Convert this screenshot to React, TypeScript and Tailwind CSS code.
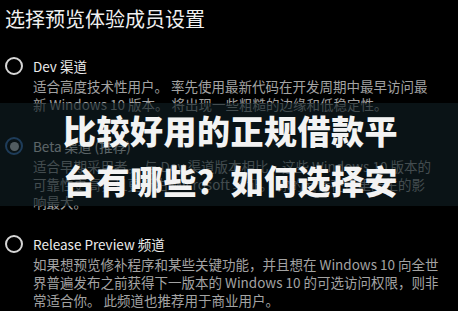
const sections = [
  {
    label: "Dev 渠道",
    selected: false,
    lines: [
      "适合高度技术性用户。 率先使用最新代码在开发周期中最早访问最",
      "新 Windows 10 版本。 将出现一些粗糙的边缘和低稳定性。",
    ],
  },
  {
    label: "Beta 渠道 (推荐)",
    selected: true,
    lines: [
      "适合早期采用者。 与 Dev 渠道版本相比，这些 Windows 10 版本的",
      "可靠性更高，且更新由 Microsoft 验证。 你的反馈在这里产生的影",
      "响最大。",
    ],
  },
  {
    label: "Release Preview 频道",
    selected: false,
    lines: [
      "如果想预览修补程序和某些关键功能，并且想在 Windows 10 向全世",
      "界普遍发布之前获得下一版本的 Windows 10 的可选访问权限，则非",
      "常适合你。 此频道也推荐用于商业用户。",
    ],
  },
];

const Radio = ({ selected }: { selected: boolean }) =>
  selected ? (
    <div className="w-[18px] h-[18px] rounded-full border-2 border-[#3a77c2] flex items-center justify-center shrink-0">
      <div className="w-[9px] h-[9px] rounded-full bg-[#cfd3d8]" />
    </div>
  ) : (
    <div className="w-[18px] h-[18px] rounded-full border-2 border-[#d6d6d6] shrink-0" />
  );

export default function App() {
  return (
    <div
      className="relative w-[458px] h-[311px] bg-black overflow-hidden"
      style={{ fontFamily: '"Noto Sans CJK SC", "Noto Sans", sans-serif' }}
    >
      <h1 className="pt-[6px] pl-[5px] text-[20px] leading-[26px] text-[#f0f0f0] font-normal whitespace-nowrap">
        选择预览体验成员设置
      </h1>

      <div className="mt-[23px] flex flex-col gap-[22px]">
        {sections.map((s) => (
          <div key={s.label} className="flex flex-col">
            <div className="flex items-center gap-[10px] pl-[5px] h-[22px]">
              <Radio selected={s.selected} />
              <span className="text-[13.5px] leading-[22px] text-[#ececec] whitespace-nowrap">{s.label}</span>
            </div>
            <div className="pl-[33px] text-[13.5px] leading-[18px] text-[#a3a3a3]">
              {s.lines.map((l) => (
                <p key={l} className="whitespace-nowrap">{l}</p>
              ))}
            </div>
          </div>
        ))}
      </div>

      {/* headline banner over the settings */}
      <div className="absolute left-0 right-0 top-[103px] h-[103px] bg-[#0f1d22]/65 flex flex-col justify-center pl-[63px]">
        <p className="text-[33px] leading-[50px] font-black tracking-[0.5px] text-[#f3f3f3] whitespace-nowrap">
          比较好用的正规借款平
        </p>
        <p className="text-[33px] leading-[50px] font-black tracking-[0.5px] text-[#f3f3f3] whitespace-nowrap">
          台有哪些？如何选择安
        </p>
      </div>
    </div>
  );
}
